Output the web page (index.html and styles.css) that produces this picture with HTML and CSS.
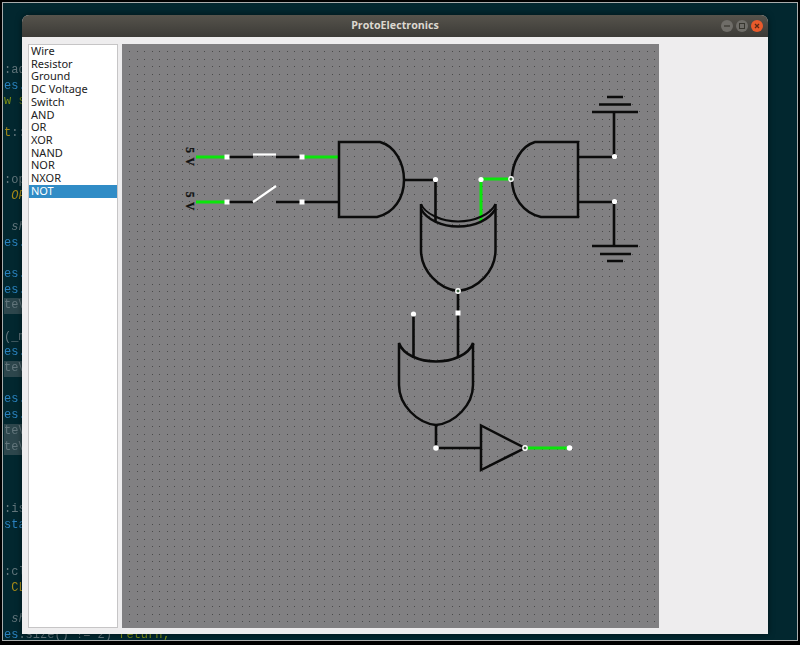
FILE: index.html
```html
<!DOCTYPE html>
<html lang="en">
<head>
  <meta charset="UTF-8" />
  <title>ProtoElectronics</title>
  <link rel="stylesheet" href="styles.css">
</head>
<body>
  <div class="desktop">
    <!-- editor text behind the window -->
    <div class="code">
      <div class="line gray">:add</div>
      <div class="line blue">es.</div>
      <div class="line lime">w s</div>
      <div class="line"></div>
      <div class="line"><span class="olive">t</span><span class="gray">::</span></div>
      <div class="line"></div>
      <div class="line"></div>
      <div class="line gray">:op</div>
      <div class="line olive italic"> OP</div>
      <div class="line"></div>
      <div class="line gray italic"> sh</div>
      <div class="line blue">es.</div>
      <div class="line"></div>
      <div class="line blue">es.</div>
      <div class="line blue">es.</div>
      <div class="line gray mark">teV</div>
      <div class="line"></div>
      <div class="line gray">(_m</div>
      <div class="line blue">es.</div>
      <div class="line gray mark">teV</div>
      <div class="line"></div>
      <div class="line blue">es.</div>
      <div class="line blue">es.</div>
      <div class="line gray mark">teV</div>
      <div class="line gray mark">teV</div>
      <div class="line"></div>
      <div class="line"></div>
      <div class="line"></div>
      <div class="line gray">:is</div>
      <div class="line blue">sta</div>
      <div class="line"></div>
      <div class="line"></div>
      <div class="line gray">:cl</div>
      <div class="line olive"> CL</div>
      <div class="line"></div>
      <div class="line gray italic"> sh</div>
      <div class="line"><span class="blue">es</span><span class="gray">.size() != 2) </span><span class="lime">return;</span></div>
    </div>

    <div class="window">
      <div class="titlebar">
        <span></span>
        <span class="title">ProtoElectronics</span>
        <div class="buttons">
          <svg class="wbtn" viewBox="0 0 12 12"><circle cx="6" cy="6" r="6" fill="#6f6d68"/><path d="M3 6h6" stroke="#37362f" stroke-width="1.2"/></svg>
          <svg class="wbtn" viewBox="0 0 12 12"><circle cx="6" cy="6" r="6" fill="#6f6d68"/><rect x="3.5" y="3.5" width="5" height="5" fill="none" stroke="#37362f"/></svg>
          <svg class="wbtn" viewBox="0 0 12 12"><circle cx="6" cy="6" r="6" fill="#e95a2b"/><path d="M4 4l4 4M8 4l-4 4" stroke="#5c2a14" stroke-width="1.3"/></svg>
        </div>
      </div>
      <div class="content">
        <ul class="parts">
          <li>Wire</li>
          <li>Resistor</li>
          <li>Ground</li>
          <li>DC Voltage</li>
          <li>Switch</li>
          <li>AND</li>
          <li>OR</li>
          <li>XOR</li>
          <li>NAND</li>
          <li>NOR</li>
          <li>NXOR</li>
          <li class="selected">NOT</li>
        </ul>

        <!-- viewBox uses window coordinates so the circuit is easy to read off -->
        <svg class="board" viewBox="122 44 537 584">
          <defs>
            <pattern id="dots" patternUnits="userSpaceOnUse" x="129" y="51" width="15" height="15">
              <rect width="1" height="1" fill="#4a4a4a"/>
              <rect x="8" width="1" height="1" fill="#4a4a4a"/>
              <rect y="8" width="1" height="1" fill="#4a4a4a"/>
              <rect x="8" y="8" width="1" height="1" fill="#4a4a4a"/>
            </pattern>
          </defs>
          <rect x="122" y="44" width="537" height="584" fill="#818082"/>
          <rect x="126" y="48" width="530" height="576" fill="url(#dots)"/>

          <text class="volt" transform="translate(185.500 156.500) rotate(90)">5 V</text>
          <text class="volt" transform="translate(185.500 201) rotate(90)">5 V</text>

          <g class="wire">
            <path d="M227 157H253M276 157H302"/>
            <path d="M227 202H253M276 202H339"/>
            <path d="M404 180H435.500V222"/>
            <path d="M578 157H614V112M578 202H614V246"/>
            <path d="M592 112H638M599 104.500H631M607 97H623"/>
            <path d="M592 246H638M600 254H631M607 261H623"/>
            <path d="M458 291V357M413.500 314V358"/>
            <path d="M436 425V448H481"/>
          </g>

          <g class="wire live">
            <path d="M196 157H227M302 157H339"/>
            <path d="M196 202H227"/>
            <path d="M481 222V179H511"/>
            <path d="M525 448H569"/>
          </g>

          <g class="wire open">
            <path d="M253 154.500H276"/>
            <path d="M253 202L276 186"/>
          </g>

          <g class="gate">
            <!-- AND -->
            <path d="M339 142H380C395 146 404 163 404 180C404 198 394 213 377 217H339Z"/>
            <!-- AND, mirrored -->
            <path d="M578 142H535C521 146 512 163 512 179C512 197 523 213 541 217H578Z"/>
            <!-- XNOR -->
            <path d="M421 204C425 214 442 221.500 458 221.500C475 221.500 491 214 495.500 204" class="thin"/>
            <path d="M421 209C427 220 442 226.500 458 226.500C475 226.500 489 220 495.500 209"/>
            <path d="M421 204V250C421 271 439 289 458 291C478 289 495.500 271 495.500 250V204"/>
            <!-- OR -->
            <path d="M399 343C403 355 420 361.500 436 361.500C452 361.500 469 355 473 343V385C473 405 455 423 436 425C417 423 399 405 399 385Z"/>
            <!-- NOT -->
            <path d="M481 425.500V470L525 448Z"/>
          </g>

          <g class="node">
            <rect x="224.500" y="154.500" width="5" height="5"/>
            <rect x="299.500" y="154.500" width="5" height="5"/>
            <rect x="224.500" y="199.500" width="5" height="5"/>
            <rect x="299.500" y="199.500" width="5" height="5"/>
            <rect x="455.500" y="310.500" width="5" height="5"/>
            <circle cx="435.500" cy="179.500" r="2.600"/>
            <circle cx="481" cy="179.500" r="2.600"/>
            <circle cx="614.500" cy="156.500" r="2.600"/>
            <circle cx="614.500" cy="201.500" r="2.600"/>
            <circle cx="413.500" cy="314" r="2.600"/>
            <circle cx="436" cy="448" r="2.800"/>
            <circle cx="569.500" cy="448" r="2.800"/>
          </g>

          <g class="pin">
            <circle cx="511" cy="179" r="2.200"/>
            <circle cx="458" cy="291" r="2.200"/>
            <circle cx="525" cy="448" r="2.200"/>
          </g>
        </svg>
      </div>
    </div>
  </div>
</body>
</html>
```

FILE: styles.css
```css
html, body {
  margin: 0;
  height: 100%;
  background-color: #000;
  overflow: hidden;
}

.desktop {
  position: relative;
  height: 637px;
  margin: 2px 2px 0;
  border: 1px solid #a9acac;
  background-color: #02272f;
  overflow: hidden;
}

.code {
  padding: 60px 0 0 1px;
  font-family: "Liberation Mono", monospace;
  font-size: 12px;
  filter: blur(0.4px);
}

.line {
  height: 15.7px;
  line-height: 15.7px;
  white-space: pre;
}

.gray { color: #62757b; }
.blue { color: #2a82bf; }
.lime { color: #7d8f12; }
.olive { color: #a58a18; }
.italic { font-style: italic; }

.mark {
  width: 21px;
  background-color: #2d464c;
}

.window {
  position: absolute;
  left: 19px;
  top: 12px;
  width: 746px;
  height: 619px;
  display: flex;
  flex-direction: column;
  background-color: #eeedee;
  border-radius: 7px 7px 0 0;
  box-shadow: 0 0 6px rgba(0, 0, 0, 0.5);
}

.titlebar {
  height: 22px;
  display: grid;
  grid-template-columns: 1fr auto 1fr;
  align-items: center;
  background: linear-gradient(#56534c, #3c3b37);
  border-radius: 7px 7px 0 0;
}

.title {
  margin-bottom: 2px;
  color: #dcd8cf;
  font-family: "Open Sans", sans-serif;
  font-size: 10.7px;
  font-weight: 700;
}

.buttons {
  display: flex;
  justify-content: flex-end;
  gap: 3px;
  padding-right: 5px;
}

.wbtn {
  width: 12px;
  height: 12px;
}

.content {
  display: flex;
  gap: 4px;
  padding: 7px 6px 6px;
}

.parts {
  width: 90px;
  height: 584px;
  box-sizing: border-box;
  margin: 0;
  padding: 0;
  list-style: none;
  background-color: #fff;
  border: 1px solid #c6c5c6;
  font-family: "Noto Sans", sans-serif;
  font-size: 11px;
  color: #222;
}

.parts li {
  height: 12.73px;
  line-height: 11px;
  padding-left: 2px;
}

.parts .selected {
  background-color: #308cc6;
  color: #fff;
}

.board {
  display: block;
  width: 537px;
  height: 584px;
}

.volt {
  font-family: "Liberation Serif", serif;
  font-size: 11.5px;
  font-weight: 700;
  word-spacing: 2px;
  fill: #111;
  stroke: #111;
  stroke-width: 0.3;
  text-anchor: middle;
}

.wire {
  fill: none;
  stroke: #0b0b0b;
  stroke-width: 2.6;
}

.live {
  stroke: #0be60b;
  stroke-width: 3;
}

.open {
  stroke: #fff;
  stroke-width: 2.2;
}

.gate {
  fill: none;
  stroke: #0b0b0b;
  stroke-width: 2.5;
}

.gate .thin {
  stroke-width: 2;
}

.node {
  fill: #fff;
}

.pin {
  fill: #3f5f3f;
  stroke: #fff;
  stroke-width: 1.4;
}
```
